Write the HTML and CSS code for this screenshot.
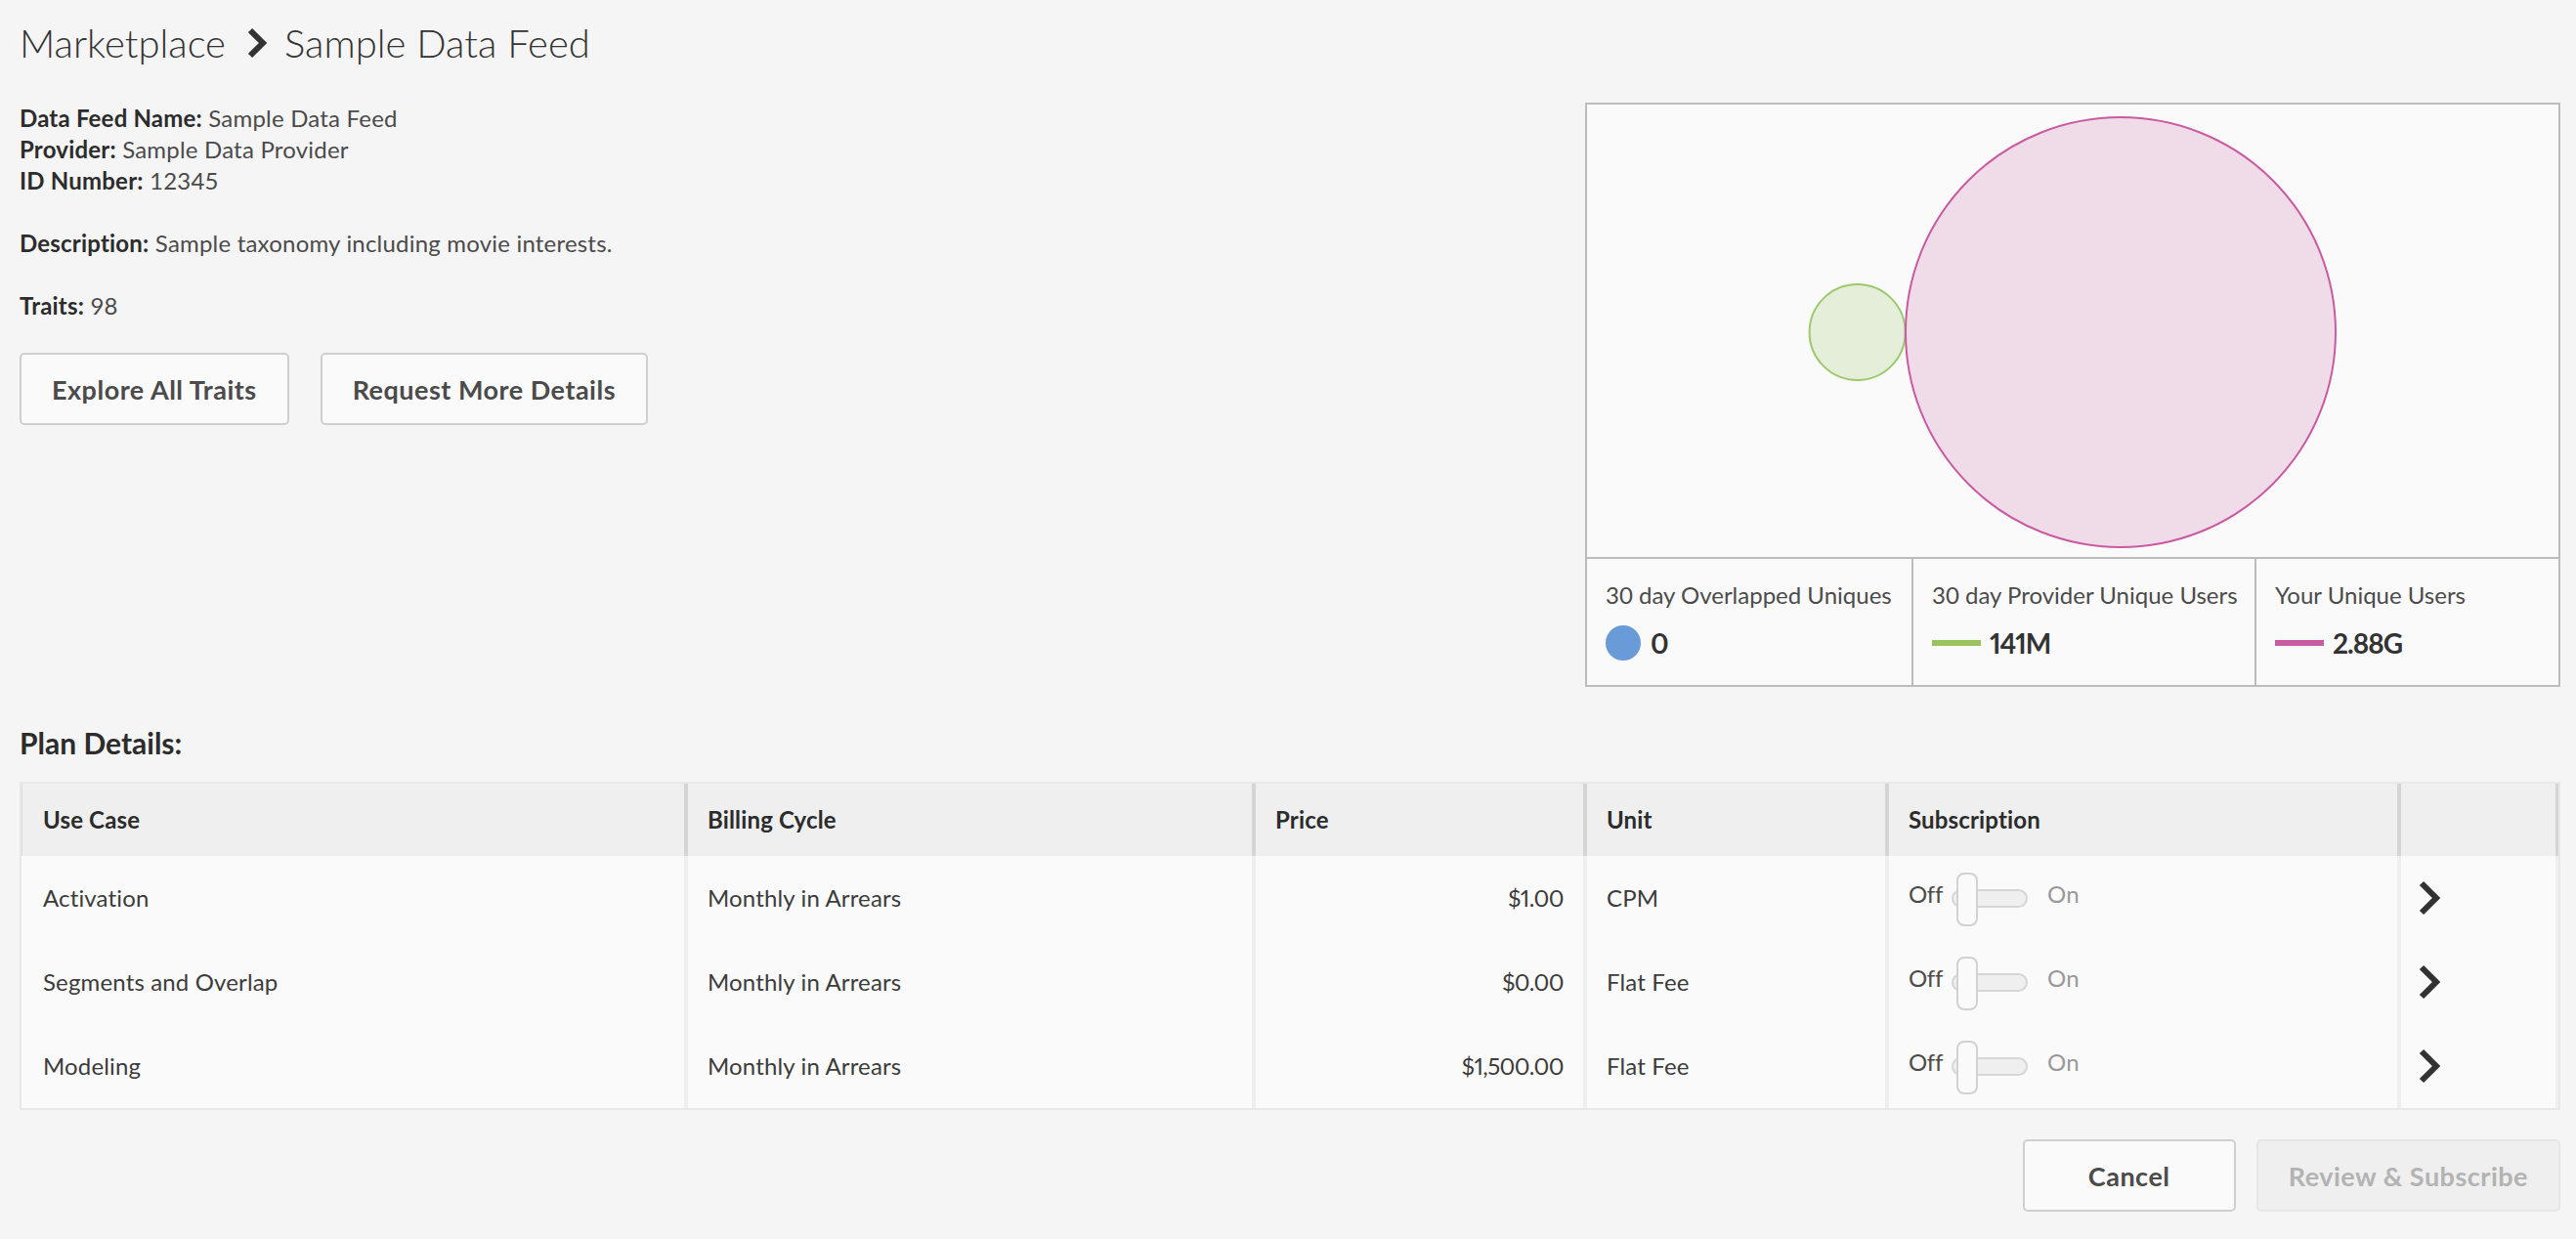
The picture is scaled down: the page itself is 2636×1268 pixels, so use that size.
FILE: index.html
```html
<!DOCTYPE html>
<html lang="en">
<head>
<meta charset="utf-8">
<title>Marketplace - Sample Data Feed</title>
<link rel="stylesheet" href="styles.css">
</head>
<body>
<div class="page">
  <h1 class="crumbs">
    <span class="crumb">Marketplace</span>
    <svg class="crumb-sep" width="20" height="32" viewBox="0 0 20 32"><path d="M3 3 L16 16 L3 29" fill="none" stroke="#333" stroke-width="6"/></svg>
    <span class="crumb">Sample Data Feed</span>
  </h1>

  <div class="top">
    <div class="info">
      <p class="para"><b>Data Feed Name:</b> Sample Data Feed<br><b>Provider:</b> Sample Data Provider<br><b>ID Number:</b> 12345</p>
      <p class="para"><b>Description:</b> Sample taxonomy including movie interests.</p>
      <p class="para"><b>Traits:</b> 98</p>
      <div class="actions">
        <button class="btn">Explore All Traits</button>
        <button class="btn">Request More Details</button>
      </div>
    </div>

    <div class="venn">
      <div class="chart">
        <svg width="994" height="463" viewBox="0 0 994 463">
          <circle cx="276.6" cy="233" r="49" fill="#e5eed9" stroke="#9cc96c" stroke-width="2"/>
          <circle cx="546" cy="233" r="220" fill="#f0dce8" stroke="#c95ba3" stroke-width="2"/>
        </svg>
      </div>
      <div class="legend">
        <div class="legend-col c1">
          <div class="legend-label">30 day Overlapped Uniques</div>
          <div class="legend-value"><span class="dot"></span>0</div>
        </div>
        <div class="legend-col c2">
          <div class="legend-label">30 day Provider Unique Users</div>
          <div class="legend-value"><span class="bar green"></span>141M</div>
        </div>
        <div class="legend-col c3">
          <div class="legend-label">Your Unique Users</div>
          <div class="legend-value"><span class="bar pink"></span>2.88G</div>
        </div>
      </div>
    </div>
  </div>

  <h2 class="section-title">Plan Details:</h2>

  <div class="plan">
    <div class="row head">
      <div class="cell">Use Case</div>
      <div class="cell">Billing Cycle</div>
      <div class="cell">Price</div>
      <div class="cell">Unit</div>
      <div class="cell">Subscription</div>
      <div class="cell"></div>
    </div>
    <div class="row">
      <div class="cell">Activation</div>
      <div class="cell">Monthly in Arrears</div>
      <div class="cell num">$1.00</div>
      <div class="cell">CPM</div>
      <div class="cell"><div class="switch"><span class="sw-off">Off</span><span class="sw-track"><span class="sw-knob"></span></span><span class="sw-on">On</span></div></div>
      <div class="cell"><svg class="go" width="24" height="36" viewBox="0 0 24 36"><path d="M3 3 L18 18 L3 33" fill="none" stroke="#323232" stroke-width="6"/></svg></div>
    </div>
    <div class="row">
      <div class="cell">Segments and Overlap</div>
      <div class="cell">Monthly in Arrears</div>
      <div class="cell num">$0.00</div>
      <div class="cell">Flat Fee</div>
      <div class="cell"><div class="switch"><span class="sw-off">Off</span><span class="sw-track"><span class="sw-knob"></span></span><span class="sw-on">On</span></div></div>
      <div class="cell"><svg class="go" width="24" height="36" viewBox="0 0 24 36"><path d="M3 3 L18 18 L3 33" fill="none" stroke="#323232" stroke-width="6"/></svg></div>
    </div>
    <div class="row">
      <div class="cell">Modeling</div>
      <div class="cell">Monthly in Arrears</div>
      <div class="cell num">$1,500.00</div>
      <div class="cell">Flat Fee</div>
      <div class="cell"><div class="switch"><span class="sw-off">Off</span><span class="sw-track"><span class="sw-knob"></span></span><span class="sw-on">On</span></div></div>
      <div class="cell"><svg class="go" width="24" height="36" viewBox="0 0 24 36"><path d="M3 3 L18 18 L3 33" fill="none" stroke="#323232" stroke-width="6"/></svg></div>
    </div>
  </div>

  <div class="footer">
    <button class="btn cancel">Cancel</button>
    <button class="btn disabled" disabled>Review &amp; Subscribe</button>
  </div>
</div>
</body>
</html>
```

FILE: styles.css
```css
* { box-sizing: border-box; }
html, body { margin: 0; padding: 0; background: #f5f5f5; }
body {
  font-family: "Lato", "Liberation Sans", sans-serif;
  color: #4b4b4b;
  font-size: 24px;
  line-height: 32px;
}
.page { padding: 0 16px 0 20px; }

.crumbs {
  margin: 20px 0 0;
  font-size: 40px;
  line-height: 48px;
  font-weight: 300;
  color: #333;
  display: flex;
  align-items: center;
}
.crumb-sep { margin: 0 18px 0 22px; }

.top {
  display: flex;
  justify-content: space-between;
  align-items: flex-start;
  margin-top: 37px;
}
.info { flex: 1; }
.para { margin: 0 0 32px; letter-spacing: 0.2px; }
.para b { color: #2c2c2c; font-weight: 700; }

.actions { display: flex; gap: 32px; }
.btn {
  font-family: inherit;
  font-size: 27px;
  letter-spacing: 0.5px;
  font-weight: 700;
  color: #4b4b4b;
  background: #fafafa;
  border: 2px solid #cfcfcf;
  border-radius: 5px;
  height: 74px;
  padding: 0 31px;
}
.btn.cancel { min-width: 218px; }

.venn {
  width: 998px;
  border: 2px solid #bcbcbc;
  background: #fafafa;
}
.chart { height: 463px; }
.chart svg { display: block; }
.legend {
  display: flex;
  border-top: 2px solid #bcbcbc;
  height: 131px;
}
.legend-col { padding: 21px 0 0 19px; }
.legend-col.c1 { width: 332px; }
.legend-col.c2 { width: 351px; border-left: 2px solid #bcbcbc; }
.legend-col.c3 { flex: 1; border-left: 2px solid #bcbcbc; }
.legend-label { font-size: 24px; line-height: 32px; color: #4b4b4b; }
.legend-value {
  margin-top: 15px;
  height: 36px;
  display: flex;
  align-items: center;
  font-size: 28px;
  letter-spacing: -1px;
  font-variant-numeric: proportional-nums;
  font-weight: 700;
  color: #333;
}
.dot {
  width: 36px; height: 36px; border-radius: 50%;
  background: #6a9bd9;
  margin-right: 10px;
}
.bar { width: 50px; height: 6px; margin-right: 9px; }
.bar.green { background: #98c35e; }
.bar.pink { background: #c95ba3; }

.section-title {
  margin: 39px 0 22px;
  font-size: 30px;
  line-height: 36px;
  font-weight: 700;
  color: #2c2c2c;
}

.plan {
  border: 2px solid #e8e8e8;
  background: #fafafa;
}
.row {
  display: grid;
  grid-template-columns: 678px 581px 339px 309px 524px 1fr;
  height: 86px;
}
.row.head { height: 74px; background: #efefef; font-weight: 700; color: #2c2c2c; }
.cell {
  display: flex;
  align-items: center;
  padding: 0 20px;
  border-left: 4px solid #efefef;
  color: #3c3c3c;
  letter-spacing: 0.15px;
}
.cell:first-child { border-left: 0; padding-left: 22px; }
.cell:last-child { border-right: 3px solid #efefef; }
.row.head .cell { border-left-color: #d5d5d5; color: #2c2c2c; }
.row.head .cell:first-child { border-left: 1px solid #dddddd; padding-left: 21px; }
.row.head .cell:last-child { border-right-color: #d5d5d5; }
.cell.num {
  justify-content: flex-end;
  font-variant-numeric: proportional-nums;
  letter-spacing: -0.6px;
}

.switch { display: flex; align-items: center; height: 56px; }
.sw-off { color: #4b4b4b; margin-bottom: 8px; letter-spacing: -0.3px; }
.sw-on { color: #999; margin-bottom: 8px; }
.sw-track {
  position: relative;
  width: 78px; height: 19px;
  margin: 0 20px 0 9px;
  border: 2px solid #d6d6d6;
  border-radius: 10px;
  background: #efefef;
}
.sw-knob {
  position: absolute;
  left: 3px; top: -19px;
  width: 22px; height: 55px;
  border: 2px solid #d2d2d2;
  border-radius: 8px;
  background: #fafafa;
}
.go { margin-left: -2px; }

.footer {
  display: flex;
  justify-content: flex-end;
  gap: 21px;
  margin-top: 30px;
}
.btn.disabled {
  color: #b3b3b3;
  background: #efefef;
  border-color: #e6e6e6;
}
```
